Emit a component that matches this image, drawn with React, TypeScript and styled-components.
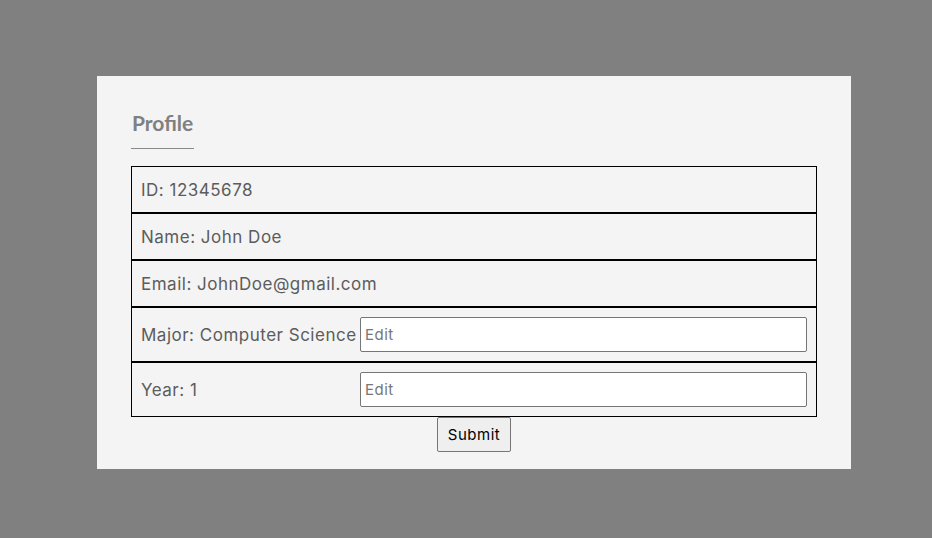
import React from 'react';
import styled, { createGlobalStyle } from 'styled-components';

const GlobalStyle = createGlobalStyle`
  html, body {
    margin: 0;
    padding: 0;
    background: #808080;
    min-height: 100%;
  }
  body {
    font-family: Inter, 'Open Sans', sans-serif;
  }
`;

const Page = styled.div`
  min-height: 538px;
  padding-top: 76px;
  padding-left: 97px;
  box-sizing: border-box;
`;

const Card = styled.div`
  width: 754px;
  box-sizing: border-box;
  background: #f4f4f4;
  padding: 33px 34px 17px 34px;
  display: flex;
  flex-direction: column;
`;

const Title = styled.h2`
  margin: 0;
  align-self: flex-start;
  font-family: Lato, 'Open Sans', sans-serif;
  font-weight: 700;
  font-size: 21px;
  line-height: 28px;
  color: #808080;
  padding: 0 1px 11px 1px;
  border-bottom: 1px solid #8a8a8a;
  margin-bottom: 17px;
`;

const Table = styled.div`
  display: flex;
  flex-direction: column;
`;

const Row = styled.div<{ $tall?: boolean }>`
  display: flex;
  align-items: center;
  border: 1px solid #000;
  height: ${(p) => (p.$tall ? 53 : 45)}px;
  padding: 0 9px 0 9px;
`;

const Label = styled.span`
  width: 219px;
  flex-shrink: 0;
  font-size: 17px;
  letter-spacing: 0.5px;
  color: #5c5c5c;
  white-space: nowrap;
`;

const EditInput = styled.input`
  flex: 1;
  height: 35px;
  box-sizing: border-box;
  border: 1px solid #767676;
  border-radius: 2px;
  background: #fff;
  padding: 0 4px;
  font-family: Inter, 'Open Sans', sans-serif;
  font-size: 15px;
  letter-spacing: 0.5px;
  &::placeholder {
    color: #777;
  }
`;

const SubmitButton = styled.button`
  align-self: center;
  width: 74px;
  height: 35px;
  background: #efefef;
  border: 1px solid #767676;
  border-radius: 2px;
  font-family: Inter, 'Open Sans', sans-serif;
  font-size: 15px;
  letter-spacing: 0.5px;
  color: #000;
  padding: 0;
`;

export default function App() {
  return (
    <>
      <GlobalStyle />
      <Page>
        <Card>
          <Title>Profile</Title>
          <Table>
            <Row>
              <Label>ID: 12345678</Label>
            </Row>
            <Row>
              <Label>Name: John Doe</Label>
            </Row>
            <Row>
              <Label>Email: JohnDoe@gmail.com</Label>
            </Row>
            <Row $tall>
              <Label>Major: Computer Science</Label>
              <EditInput placeholder="Edit" />
            </Row>
            <Row $tall>
              <Label>Year: 1</Label>
              <EditInput placeholder="Edit" />
            </Row>
          </Table>
          <SubmitButton>Submit</SubmitButton>
        </Card>
      </Page>
    </>
  );
}
